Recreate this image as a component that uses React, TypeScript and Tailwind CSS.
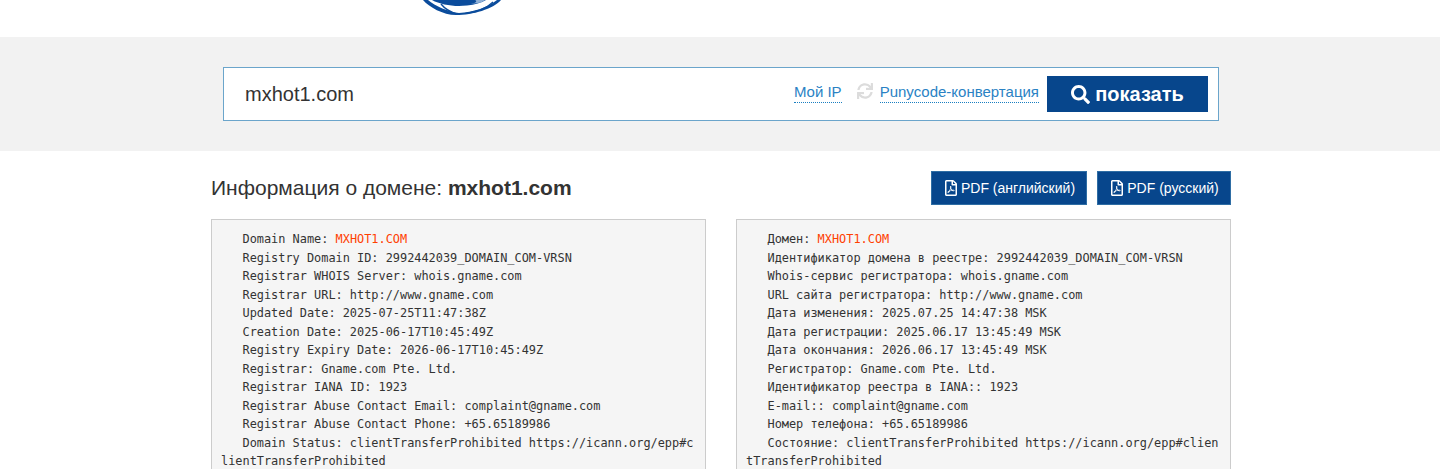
import { FaRegFilePdf, FaSearch, FaSync } from 'react-icons/fa';

const LEFT_REST = `
   Registry Domain ID: 2992442039_DOMAIN_COM-VRSN
   Registrar WHOIS Server: whois.gname.com
   Registrar URL: http://www.gname.com
   Updated Date: 2025-07-25T11:47:38Z
   Creation Date: 2025-06-17T10:45:49Z
   Registry Expiry Date: 2026-06-17T10:45:49Z
   Registrar: Gname.com Pte. Ltd.
   Registrar IANA ID: 1923
   Registrar Abuse Contact Email: complaint@gname.com
   Registrar Abuse Contact Phone: +65.65189986
   Domain Status: clientTransferProhibited https://icann.org/epp#clientTransferProhibited`;

const RIGHT_REST = `
   Идентификатор домена в реестре: 2992442039_DOMAIN_COM-VRSN
   Whois-сервис регистратора: whois.gname.com
   URL сайта регистратора: http://www.gname.com
   Дата изменения: 2025.07.25 14:47:38 MSK
   Дата регистрации: 2025.06.17 13:45:49 MSK
   Дата окончания: 2026.06.17 13:45:49 MSK
   Регистратор: Gname.com Pte. Ltd.
   Идентификатор реестра в IANA:: 1923
   E-mail:: complaint@gname.com
   Номер телефона: +65.65189986
   Состояние: clientTransferProhibited https://icann.org/epp#clientTransferProhibited`;

function WhoisBlock({ label, rest }: { label: string; rest: string }) {
  return (
    <pre className="w-[495px] border border-[#ccc] bg-[#f5f5f5] pl-[9px] pr-[11px] pt-[10px] pb-[10px] font-['DejaVu_Sans_Mono',monospace] text-[11.9px] leading-[18.5px] text-[#333] whitespace-pre-wrap break-all">
      {label}
      <span className="text-[#ff4000]">MXHOT1.COM</span>
      {rest}
    </pre>
  );
}

export default function App() {
  return (
    <div className="h-[469px] overflow-hidden bg-white font-['Liberation_Sans',Arial,sans-serif] text-[#333]">
      <div className="flex h-[37px] overflow-hidden pl-[415px]">
        <svg width="100" height="18" viewBox="0 0 100 18" className="shrink-0">
          <path d="M8 0 C14 7 28 15 41 15 C58 15 78 9 86 0 L82 0 C72 8 58 12 44 13 C34 12 20 6 13 0Z" fill="#0b4c9c" />
          <path d="M17 0 C26 5 40 7 52 5.5 C60 4.5 66 3 71 0Z" fill="#0b4c9c" />
          <path d="M60 0 C63 1.5 60 3 56 4 L66 2.5 L70 0Z" fill="#8fb0d6" />
          <path d="M26 4 C30 9 35 12 42 14" stroke="#0b4c9c" strokeWidth="1.4" fill="none" />
          <path d="M78 2 C72 8 62 12 50 13.5" stroke="#0b4c9c" strokeWidth="1.2" fill="none" />
        </svg>
      </div>

      <div className="flex h-[114px] justify-center bg-[#f2f2f2] pl-[2px] pt-[30px]">
        <div className="flex h-[54px] w-[996px] items-center border border-[#6ba5cb] bg-white pl-[21px] pr-[10px]">
          <span className="flex-1 text-[20px] text-[#333]">mxhot1.com</span>
          <a className="mb-[4px] border-b border-dotted border-[#1a7fc1] text-[15px] leading-[20px] text-[#2a82c4]">Мой IP</a>
          <FaSync className="mb-[6px] ml-[15px] mr-[7px] text-[16px] text-[#dcdcdc]" />
          <a className="mb-[4px] border-b border-dotted border-[#1a7fc1] text-[15px] leading-[20px] text-[#2a82c4]">Punycode-конвертация</a>
          <button className="ml-[8px] flex h-[36px] w-[161px] items-center justify-center gap-[5px] bg-[#07468c] text-[20px] font-bold text-white">
            <FaSearch className="text-[19px]" />
            показать
          </button>
        </div>
      </div>

      <div className="ml-[211px] w-[1020px]">
        <div className="flex h-[68px] items-center justify-between pt-[6px]">
          <h1 className="text-[21px] font-normal">
            Информация о домене: <b>mxhot1.com</b>
          </h1>
          <div className="flex gap-[10px]">
            <button className="flex h-[34px] w-[156px] items-center justify-center gap-[2px] border border-[#2e6da4] bg-[#07468c] text-[14px] text-white">
              <FaRegFilePdf className="text-[16px]" />
              PDF (английский)
            </button>
            <button className="flex h-[34px] w-[134px] items-center justify-center gap-[2px] border border-[#2e6da4] bg-[#07468c] text-[14px] text-white">
              <FaRegFilePdf className="text-[16px]" />
              PDF (русский)
            </button>
          </div>
        </div>
        <div className="flex justify-between">
          <WhoisBlock label="   Domain Name: " rest={LEFT_REST} />
          <WhoisBlock label="   Домен: " rest={RIGHT_REST} />
        </div>
      </div>
    </div>
  );
}
